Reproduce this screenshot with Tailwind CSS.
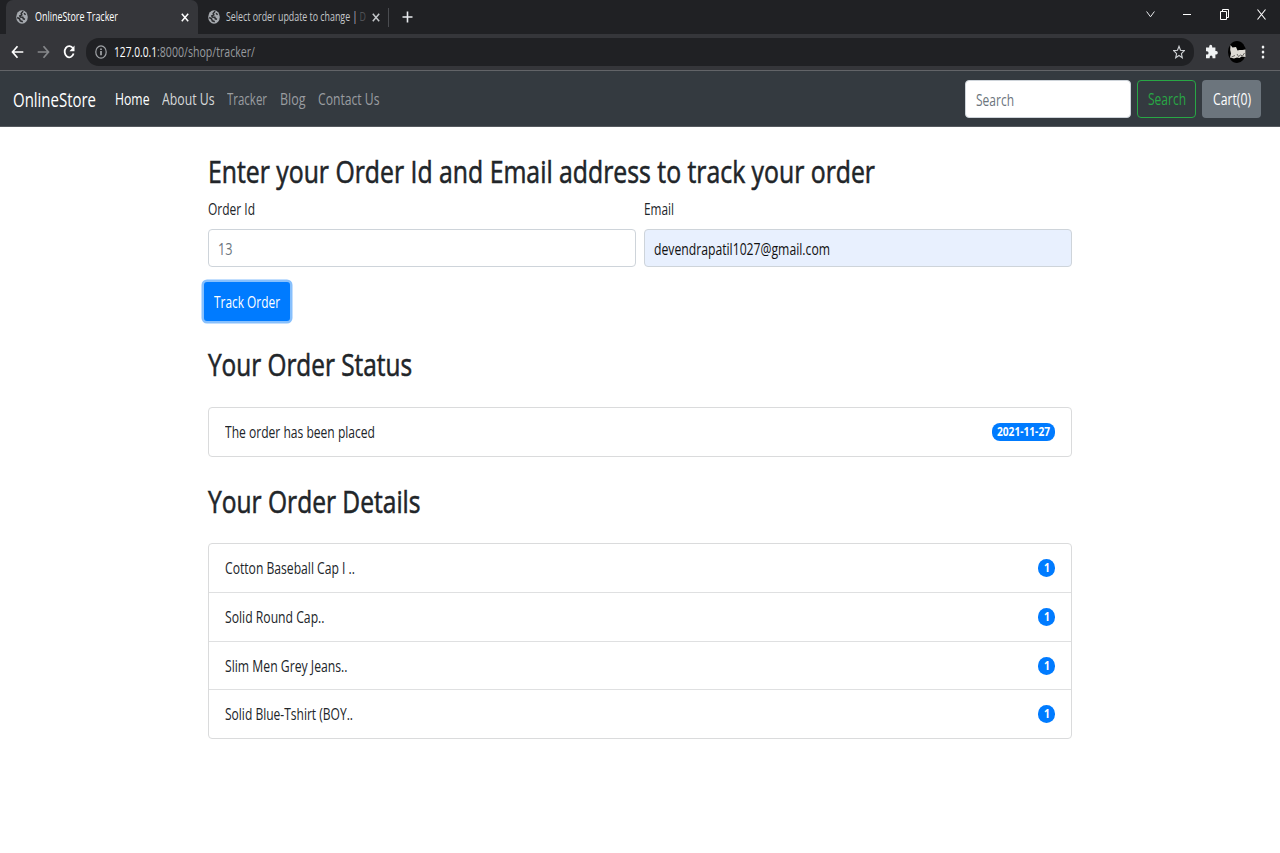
<!DOCTYPE html>
<html lang="en">
<head>
<meta charset="utf-8">
<title>OnlineStore Tracker</title>
<script src="https://cdn.jsdelivr.net/npm/@tailwindcss/browser@4"></script>
</head>
<body class="h-[853px] w-[1280px] overflow-hidden bg-white font-['Open_Sans','Noto_Sans',sans-serif] text-base leading-6 text-[#212529]">
<svg class="hidden">
  <symbol id="globe" viewBox="0 0 12 14"><ellipse cx="6" cy="7" rx="5.8" ry="6.8" fill="#a6aaaf"/><path d="M7.200 1.200L5.200 3.300 5.800 4.800 3.800 5.800 4.300 7 6.800 7.300 7.300 8.800 9 9.300M1.200 7.500L3.500 8.800 4.300 10.800 6.800 11.800M8 3.300l1.600 1.500" fill="none" stroke="#2b2c2f" stroke-width="1.500"/></symbol>
  <symbol id="cross" viewBox="0 0 8 9"><path d="M.8.8l6.4 7.4M7.2.8L.8 8.2" fill="none" stroke="currentColor" stroke-width="1.5"/></symbol>
</svg>

<div class="flex h-[34px] bg-[#202124] pl-[6px]">
  <div class="flex h-full w-[192px] items-center rounded-t-[7px] bg-[#35363a] pl-[10px] text-white">
    <svg class="h-[14px] w-[12px] shrink-0"><use href="#globe"/></svg>
    <div class="ml-[7px] flex-1 text-[12px]"><span data-w="83">OnlineStore Tracker</span></div>
    <svg class="mr-[9px] h-[9px] w-[8px] shrink-0"><use href="#cross"/></svg>
  </div>
  <div class="flex h-full w-[191px] items-center pl-[10px] text-[#c4c7ca]">
    <svg class="h-[14px] w-[12px] shrink-0"><use href="#globe"/></svg>
    <div class="ml-[6px] flex-1 whitespace-nowrap text-[12px]"><span data-w="140">Select order update to change | <span class="text-[#505256]">D</span></span></div>
    <svg class="mr-[8px] h-[9px] w-[8px] shrink-0"><use href="#cross"/></svg>
    <div class="h-[19px] w-px bg-[#4a4c50]"></div>
  </div>
  <svg class="mt-[11px] ml-[13px] h-[12px] w-[11px]" viewBox="0 0 11 12"><path d="M5.5.5v11M.5 6h10" stroke="#e8eaed" stroke-width="1.6"/></svg>
  <svg class="mt-[11px] ml-auto h-[7px] w-[9px]" viewBox="0 0 9 7"><path d="M.6.5l3.9 5.3L8.4.5" fill="none" stroke="#e8eaed"/></svg>
  <svg class="mt-[14px] ml-[28px] h-px w-[8px]"><rect width="8" height="1" fill="#fff"/></svg>
  <svg class="mt-[9px] ml-[29px] h-[11px] w-[9px]" viewBox="0 0 9 11"><path d="M.5 2.5h6v8h-6zM2.5 2V.5h6v8H7" fill="none" stroke="#fff"/></svg>
  <svg class="mt-[9px] mr-[14px] ml-[28px] h-[11px] w-[9px]" viewBox="0 0 9 11"><path d="M.5.5l8 10M8.500.5l-8 10" stroke="#fff" stroke-width="1.1"/></svg>
</div>

<div class="flex h-[36px] items-center bg-[#35363a] pb-px pl-[11px]">
  <svg class="h-[14px] w-[13px] shrink-0" viewBox="0 0 13 14"><path d="M12.300 7H1.500M6.500 1.200L1.500 7l5 5.800" fill="none" stroke="#fff" stroke-width="1.700"/></svg>
  <svg class="ml-[13px] h-[14px] w-[13px] shrink-0" viewBox="0 0 13 14"><path d="M.700 7h10.800M6.500 1.200L11.500 7l-5 5.800" fill="none" stroke="#86888b" stroke-width="1.700"/></svg>
  <svg class="ml-[13px] h-[14px] w-[12px] shrink-0" viewBox="0 0 12 14"><path d="M10 3.400A4.600 5.600 0 1 0 10.600 8.600" fill="none" stroke="#fff" stroke-width="1.800"/><path d="M11.500.5v5.700H6.500z" fill="#fff"/></svg>
  <div class="ml-[11px] flex h-[28px] w-[1108px] items-center rounded-[13px] bg-[#202124] pl-[9px]">
    <svg class="h-[14px] w-[12px] shrink-0" viewBox="0 0 12 14"><ellipse cx="6" cy="7" rx="5.200" ry="6.200" fill="none" stroke="#a0a3a7" stroke-width="1.200"/><path d="M6 6v4.300M6 3.500v1.500" stroke="#b5b8bb" stroke-width="1.500"/></svg>
    <div class="ml-[7px] flex flex-1 text-[14px] text-[#989b9f]"><span data-w="43" class="text-white">127.0.0.1</span><span data-w="98">:8000/shop/tracker/</span></div>
    <svg class="mr-[9px] h-[14px] w-[12px] shrink-0" viewBox="0 0 12 14"><path d="M6 1.300l1.500 4 3.800.300-2.900 3 .900 4.200L6 10.500l-3.300 2.300.900-4.200-2.900-3 3.800-.300z" fill="none" stroke="#d0d3d6" stroke-width="1.100"/></svg>
  </div>
  <svg class="ml-[11px] h-[15px] w-[13px] shrink-0" viewBox="0 0 13 15"><path d="M1 3.500h3.200V2.400a1.500 1.700 0 0 1 3 0v1.100h3.200V7h.9a1.500 1.800 0 0 1 0 3.600h-.9v3.600H7.500v-1.100a1.400 1.600 0 0 0-2.800 0v1.100H1v-3.600h1a1.500 1.600 0 0 0 0-3.300H1z" fill="#f1f3f4"/></svg>
  <svg class="ml-[10px] h-[22px] w-[18px] shrink-0" viewBox="0 0 18 22"><ellipse cx="9" cy="11" rx="9" ry="11" fill="#000"/><path d="M2.500 4l2 2.500L8 6l1.500 3.500 2-.5 3 0L17.500 8.500V16l-4-.5-2 1.500-2.500-.5-3 1-4-1 1-4-.8-3.500z" fill="#dedbd5"/><path d="M9 13l1.500 2.500 2-1.500 2 1 2-3M3.500 16l3.500-1.500" fill="none" stroke="#4b4a48" stroke-width=".8"/></svg>
  <svg class="ml-[15px] h-[14px] w-[4px] shrink-0" viewBox="0 0 4 14" fill="#f1f3f4"><ellipse cx="2" cy="2" rx="1.300" ry="1.500"/><ellipse cx="2" cy="7" rx="1.300" ry="1.500"/><ellipse cx="2" cy="12" rx="1.300" ry="1.500"/></svg>
</div>

<nav class="flex h-[57px] items-center border-t border-b border-t-[#626468] border-b-[#55595e] bg-[#343a40] pl-[13px] text-[#9a9da0]">
  <span data-w="83" class="mt-[2px] text-[20px] text-white">OnlineStore</span>
  <div class="ml-[19px] flex gap-[12.600px]">
    <span data-w="34.500" class="text-white">Home</span>
    <span data-w="52.500" class="text-[#d6d8d9]">About Us</span>
    <span data-w="40">Tracker</span>
    <span data-w="25.500">Blog</span>
    <span data-w="61.500">Contact Us</span>
  </div>
  <div class="mr-[19px] ml-auto flex gap-[6px]">
    <div class="flex h-[38px] w-[166px] items-center rounded-[4px] border border-[#ced4da] bg-white pt-[2px] pl-[10px] text-[#6c757d]"><span data-w="38">Search</span></div>
    <div class="flex h-[38px] w-[59px] items-center justify-center rounded-[4px] border border-[#28a745] text-[#28a745]"><span data-w="38">Search</span></div>
    <div class="flex h-[38px] w-[59px] items-center justify-center rounded-[4px] bg-[#6c757d] text-white"><span data-w="38">Cart(0)</span></div>
  </div>
</nav>

<main class="mx-auto w-[864px] pt-[24px]">
  <h2 class="text-[31.500px] leading-[40px] [-webkit-text-stroke:0.6px_#212529]"><span data-w="667">Enter your Order Id and Email address to track your order</span></h2>
  <div class="mt-[6px] flex gap-2">
    <div class="w-[428px]">
      <div class="h-6"><span data-w="47">Order Id</span></div>
      <div class="mt-[8px] flex h-[38px] items-center rounded-[4px] border border-[#ced4da] pt-[2px] pl-[9px] text-[#6c757d]"><span data-w="14.500">13</span></div>
    </div>
    <div class="w-[428px]">
      <div class="h-6"><span data-w="30">Email</span></div>
      <div class="mt-[8px] flex h-[38px] items-center rounded-[4px] border border-[#ced4da] bg-[#e8f0fe] pt-[2px] pl-[9px] text-[#111]"><span data-w="176">devendrapatil1027@gmail.com</span></div>
    </div>
  </div>
  <div class="mt-[15px] -ml-[4px] flex h-[39px] w-[86px] items-center justify-center rounded-[3px] bg-[#007bff] text-white ring-[2.500px] ring-[#87c0fd]"><span data-w="66">Track Order</span></div>
  <h2 class="mt-[23px] text-[31.500px] leading-[40px] [-webkit-text-stroke:0.6px_#212529]"><span data-w="204">Your Order Status</span></h2>
  <div class="mt-[23px] flex h-[50px] items-center justify-between rounded-[4px] border border-[#dadbdc] px-[16px]">
    <span data-w="150">The order has been placed</span>
    <div class="flex h-[18px] w-[63px] items-center justify-center rounded-[8px] bg-[#007bff] text-[12px] font-bold text-white"><span data-w="53">2021-11-27</span></div>
  </div>
  <h2 class="mt-[24px] text-[31.500px] leading-[40px] [-webkit-text-stroke:0.6px_#212529]"><span data-w="212.500">Your Order Details</span></h2>
  <div class="mt-[22px] divide-y divide-[#dfe0e1] rounded-[4px] border border-[#dadbdc]">
    <div class="flex h-[49px] items-center justify-between px-[16px]"><span data-w="130">Cotton Baseball Cap I ..</span><div class="flex h-[18px] w-[17px] items-center justify-center rounded-full bg-[#007bff] text-[12px] font-bold text-white"><span data-w="6">1</span></div></div>
    <div class="flex h-[49px] items-center justify-between px-[16px]"><span data-w="99.500">Solid Round Cap..</span><div class="flex h-[18px] w-[17px] items-center justify-center rounded-full bg-[#007bff] text-[12px] font-bold text-white"><span data-w="6">1</span></div></div>
    <div class="flex h-[48px] items-center justify-between px-[16px]"><span data-w="122.500">Slim Men Grey Jeans..</span><div class="flex h-[18px] w-[17px] items-center justify-center rounded-full bg-[#007bff] text-[12px] font-bold text-white"><span data-w="6">1</span></div></div>
    <div class="flex h-[48px] items-center justify-between px-[16px]"><span data-w="128">Solid Blue-Tshirt (BOY..</span><div class="flex h-[18px] w-[17px] items-center justify-center rounded-full bg-[#007bff] text-[12px] font-bold text-white"><span data-w="6">1</span></div></div>
  </div>
</main>
<script>
// Condense each label to the width given in data-w; refit whenever its natural size changes.
function fit(el) {
  el.style.transform = 'none';
  var natural = el.getBoundingClientRect().width, w = parseFloat(el.dataset.w);
  if (!natural) return;
  el.style.transform = 'scaleX(' + w / natural + ')';
  el.style.marginRight = (w - natural) + 'px';
}
var labels = document.querySelectorAll('[data-w]');
var watcher = new ResizeObserver(function (entries) {
  entries.forEach(function (e) { fit(e.target); });
});
labels.forEach(function (el) {
  el.style.display = 'inline-block';
  el.style.whiteSpace = 'nowrap';
  el.style.flexShrink = '0';
  el.style.transformOrigin = '0 50%';
  watcher.observe(el);
});
function fitAll() { labels.forEach(fit); }
window.addEventListener('load', fitAll);
document.fonts.ready.then(fitAll);
</script>
</body>
</html>
